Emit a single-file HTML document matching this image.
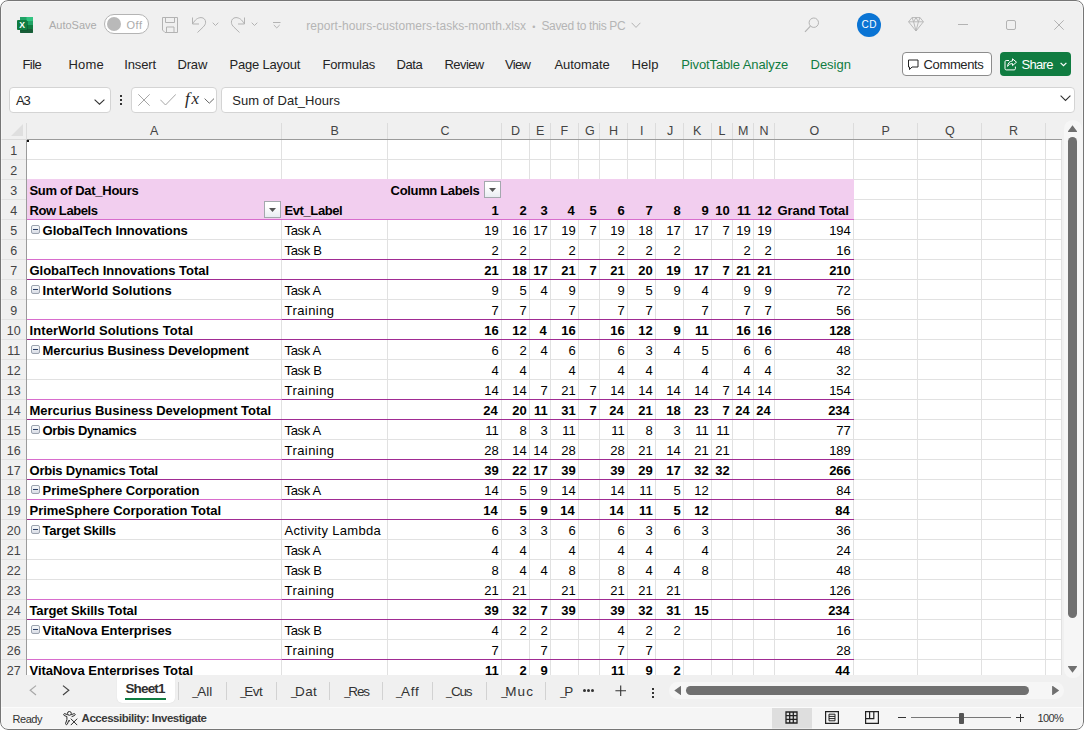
<!DOCTYPE html>
<html lang="en"><head><meta charset="utf-8"><title>report-hours-customers-tasks-month.xlsx - Excel</title>
<style>
html,body{margin:0;padding:0;background:#fff;overflow:hidden}
#win{position:relative;width:1084px;height:730px;box-sizing:border-box;background:#f0f0f0;border-radius:8px;overflow:hidden}
#frame{position:absolute;left:0;top:0;width:1084px;height:730px;box-sizing:border-box;border:1px solid #767676;border-radius:8px;pointer-events:none;box-shadow:inset 0 0 0 1px rgba(255,255,255,.4)}
.t{position:absolute;white-space:pre;}
.b{position:absolute;display:block}
</style></head>
<body><div id="win">
<svg class="b" style="left:17px;top:17px;" width="16" height="16" viewBox="0 0 16 16"><rect x="3" y="0" width="13" height="16" rx="1" fill="#21a366"/>
<rect x="3" y="0" width="6.5" height="4" fill="#21a366"/><rect x="9.5" y="0" width="6.5" height="4" fill="#33c481"/>
<rect x="9.5" y="4" width="6.5" height="4" fill="#21a366"/><rect x="3" y="4" width="6.5" height="4" fill="#107c41"/>
<rect x="3" y="8" width="13" height="4" fill="#107c41"/><rect x="3" y="12" width="13" height="4" rx="1" fill="#185c37"/>
<rect x="3.5" y="4" width="7.5" height="10" fill="#0b5a2e" opacity=".55"/>
<rect x="0" y="3" width="10" height="10" rx="1" fill="#107c41"/>
<text x="5.1" y="11.05" text-anchor="middle" font-family="Liberation Sans, sans-serif" font-weight="bold" font-size="8.6" fill="#fff">X</text></svg>
<span class="t" style="left:49.00px;top:15.19px;font:normal normal 11px/20px 'Liberation Sans', sans-serif;color:#ababab;letter-spacing:-0.012px;">AutoSave</span>
<div class="b" style="left:104px;top:14px;width:45px;height:20px;box-sizing:border-box;border:1px solid #b4b4b4;border-radius:10px;background:#fff"></div>
<div class="b" style="left:107px;top:17px;width:14px;height:14px;border-radius:7px;background:#b9b9b9"></div>
<span class="t" style="left:126.60px;top:15.19px;font:normal normal 11px/20px 'Liberation Sans', sans-serif;color:#ababab;letter-spacing:0.443px;">Off</span>
<svg class="b" style="left:162px;top:17px;" width="16" height="16" viewBox="0 0 16 16"><path d="M0.5 0.5h15v15H3l-2.5-2.5z M3.5 0.5v5h9v-5 M4.5 15.5v-5.5h7.5v5.5" fill="none" stroke="#b3b3b3" stroke-width="1"/></svg>
<svg class="b" style="left:191px;top:16px;" width="16" height="18" viewBox="0 0 16 18"><path d="M1.5 1.5v6.5h6.5 M2 7.6C4 3.5 7 1.6 10 1.6c3 0 4.6 2.2 4.6 4.6 0 2-1 3.4-2.6 5L6.5 16.5" fill="none" stroke="#b3b3b3" stroke-width="1"/></svg>
<svg class="b" style="left:212px;top:22px;" width="7" height="5" viewBox="0 0 7 5"><path d="M0.7 0.7l2.8 2.8 2.8-2.8" fill="none" stroke="#b3b3b3" stroke-width="1"/></svg>
<svg class="b" style="left:230px;top:16px;" width="16" height="18" viewBox="0 0 16 18"><path d="M14.5 1.5v6.5h-6.5 M14 7.6C12 3.5 9 1.6 6 1.6c-3 0-4.6 2.2-4.6 4.6 0 2 1 3.4 2.6 5L9.5 16.5" fill="none" stroke="#b3b3b3" stroke-width="1"/></svg>
<svg class="b" style="left:251px;top:22px;" width="7" height="5" viewBox="0 0 7 5"><path d="M0.7 0.7l2.8 2.8 2.8-2.8" fill="none" stroke="#b3b3b3" stroke-width="1"/></svg>
<svg class="b" style="left:273px;top:21px;" width="8" height="8" viewBox="0 0 8 8"><path d="M0 1.5h7.5 M0.8 4l2.95 2.9 2.95-2.9" fill="none" stroke="#b3b3b3" stroke-width="1"/></svg>
<span class="t" style="left:306.30px;top:16.34px;font:normal normal 12px/20px 'Liberation Sans', sans-serif;color:#b5b5b5;letter-spacing:0.046px;">report-hours-customers-tasks-month.xlsx</span>
<span class="t" style="left:532.30px;top:17.38px;font:normal normal 9px/20px 'Liberation Sans', sans-serif;color:#b5b5b5;letter-spacing:0.000px;">•</span>
<span class="t" style="left:541.40px;top:16.34px;font:normal normal 12px/20px 'Liberation Sans', sans-serif;color:#b5b5b5;letter-spacing:-0.341px;">Saved to this PC</span>
<svg class="b" style="left:631px;top:22px;" width="10" height="7" viewBox="0 0 10 7"><path d="M0.6 0.8l4.4 4.6 4.4-4.6" fill="none" stroke="#b3b3b3" stroke-width="1"/></svg>
<svg class="b" style="left:804px;top:16px;" width="16" height="17" viewBox="0 0 16 17"><circle cx="9.8" cy="6.7" r="4.7" fill="none" stroke="#b3b3b3" stroke-width="1"/><path d="M6.4 10.2L1 15.8" stroke="#b3b3b3" stroke-width="1.2" fill="none"/></svg>
<div class="b" style="left:857px;top:13px;width:24px;height:24px;border-radius:12px;background:#0a74d4"></div>
<span class="t" style="left:861.50px;top:15.34px;font:normal normal 10px/20px 'Liberation Sans', sans-serif;color:#fff;letter-spacing:0.478px;">CD</span>
<svg class="b" style="left:908px;top:17px;" width="16" height="15" viewBox="0 0 16 15"><path d="M4 0.6h8l3.4 4.2L8 14 0.6 4.8z M0.6 4.8h14.8 M4 0.6l1.6 4.2L8 14l2.4-9.2L12 0.6 M5.6 4.8L8 0.6l2.4 4.2" fill="none" stroke="#b3b3b3" stroke-width="0.9" stroke-linejoin="round"/></svg>
<div class="b" style="left:958px;top:24px;width:10px;height:1px;background:#b3b3b3"></div>
<div class="b" style="left:1006px;top:20px;width:10px;height:10px;box-sizing:border-box;border:1px solid #b3b3b3;border-radius:2px"></div>
<svg class="b" style="left:1054px;top:20px;" width="10" height="10" viewBox="0 0 10 10"><path d="M0.3 0.3l9.4 9.4 M9.7 0.3l-9.4 9.4" stroke="#b3b3b3" stroke-width="1" fill="none"/></svg>
<span class="t" style="left:22.40px;top:54.50px;font:normal normal 13px/20px 'Liberation Sans', sans-serif;color:#242424;letter-spacing:-0.539px;">File</span>
<span class="t" style="left:68.50px;top:54.50px;font:normal normal 13px/20px 'Liberation Sans', sans-serif;color:#242424;letter-spacing:0.151px;">Home</span>
<span class="t" style="left:124.30px;top:54.50px;font:normal normal 13px/20px 'Liberation Sans', sans-serif;color:#242424;letter-spacing:-0.140px;">Insert</span>
<span class="t" style="left:177.50px;top:54.50px;font:normal normal 13px/20px 'Liberation Sans', sans-serif;color:#242424;letter-spacing:-0.182px;">Draw</span>
<span class="t" style="left:229.60px;top:54.50px;font:normal normal 13px/20px 'Liberation Sans', sans-serif;color:#242424;letter-spacing:-0.219px;">Page Layout</span>
<span class="t" style="left:322.50px;top:54.50px;font:normal normal 13px/20px 'Liberation Sans', sans-serif;color:#242424;letter-spacing:-0.211px;">Formulas</span>
<span class="t" style="left:396.60px;top:54.50px;font:normal normal 13px/20px 'Liberation Sans', sans-serif;color:#242424;letter-spacing:-0.477px;">Data</span>
<span class="t" style="left:444.60px;top:54.50px;font:normal normal 13px/20px 'Liberation Sans', sans-serif;color:#242424;letter-spacing:-0.607px;">Review</span>
<span class="t" style="left:505.10px;top:54.50px;font:normal normal 13px/20px 'Liberation Sans', sans-serif;color:#242424;letter-spacing:-0.718px;">View</span>
<span class="t" style="left:554.40px;top:54.50px;font:normal normal 13px/20px 'Liberation Sans', sans-serif;color:#242424;letter-spacing:-0.031px;">Automate</span>
<span class="t" style="left:631.40px;top:54.50px;font:normal normal 13px/20px 'Liberation Sans', sans-serif;color:#242424;letter-spacing:0.131px;">Help</span>
<span class="t" style="left:681.20px;top:54.50px;font:normal normal 13px/20px 'Liberation Sans', sans-serif;color:#107c41;letter-spacing:-0.118px;">PivotTable Analyze</span>
<span class="t" style="left:810.50px;top:54.50px;font:normal normal 13px/20px 'Liberation Sans', sans-serif;color:#107c41;letter-spacing:-0.007px;">Design</span>
<div class="b" style="left:902px;top:52px;width:90px;height:24px;box-sizing:border-box;border:1px solid #8c8c8c;border-radius:4px;background:#fff"></div>
<svg class="b" style="left:907px;top:58.5px;" width="12" height="12" viewBox="0 0 12 12"><path d="M1.5 1h9.5v7H5l-2.5 2.6V8h-1z" fill="none" stroke="#242424" stroke-width="1" stroke-linejoin="round"/></svg>
<span class="t" style="left:923.60px;top:54.50px;font:normal normal 13px/20px 'Liberation Sans', sans-serif;color:#242424;letter-spacing:-0.378px;">Comments</span>
<div class="b" style="left:1000px;top:52px;width:71px;height:24px;border-radius:4px;background:#107c41"></div>
<svg class="b" style="left:1004px;top:58px;" width="14" height="13" viewBox="0 0 14 13"><path d="M8.5 0.8l4 3.4-4 3.4V5.6C6 5.6 4.6 6.6 3.6 8.4 3.8 5.2 5.6 3.2 8.5 2.9z M5 2.5H2.2c-.7 0-1.2.5-1.2 1.2v7c0 .7.5 1.2 1.2 1.2h8c.7 0 1.2-.5 1.2-1.2V8.6" fill="none" stroke="#fff" stroke-width="1" stroke-linejoin="round"/></svg>
<span class="t" style="left:1021.50px;top:54.50px;font:normal normal 13px/20px 'Liberation Sans', sans-serif;color:#fff;letter-spacing:-0.690px;">Share</span>
<svg class="b" style="left:1060px;top:62px;" width="7" height="5" viewBox="0 0 7 5"><path d="M0.6 0.8l2.9 2.9 2.9-2.9" fill="none" stroke="#fff" stroke-width="1.2"/></svg>
<div class="b" style="left:9px;top:87px;width:102px;height:26px;box-sizing:border-box;border:1px solid #d4d4d4;border-radius:4px;background:#fff"></div>
<span class="t" style="left:15.90px;top:90.50px;font:normal normal 13px/20px 'Liberation Sans', sans-serif;color:#242424;letter-spacing:-1.071px;">A3</span>
<svg class="b" style="left:94px;top:99px;" width="11" height="6" viewBox="0 0 11 6"><path d="M0.6 0.6l4.9 4.6 4.9-4.6" fill="none" stroke="#333" stroke-width="1.1"/></svg>
<div class="b" style="left:120px;top:95px;width:2px;height:2px;background:#333"></div>
<div class="b" style="left:120px;top:99px;width:2px;height:2px;background:#333"></div>
<div class="b" style="left:120px;top:103px;width:2px;height:2px;background:#333"></div>
<div class="b" style="left:131px;top:87px;width:86px;height:26px;box-sizing:border-box;border:1px solid #d4d4d4;border-radius:4px;background:#fff"></div>
<svg class="b" style="left:138px;top:94px;" width="12" height="12" viewBox="0 0 12 12"><path d="M0.3 0.3l11.4 11.4 M11.7 0.3l-11.4 11.4" stroke="#a6a6a6" stroke-width="1" fill="none"/></svg>
<svg class="b" style="left:160px;top:94px;" width="16" height="12" viewBox="0 0 16 12"><path d="M0.3 5.7l5.2 5.3 10.4-10.7" stroke="#a6a6a6" stroke-width="1" fill="none"/></svg>
<span class="t" style="left:184.90px;top:89.11px;font:italic normal 17px/20px 'Liberation Serif', serif;color:#262626;letter-spacing:1.777px;">fx</span>
<svg class="b" style="left:204px;top:97.5px;" width="11" height="6" viewBox="0 0 11 6"><path d="M0.6 0.6l4.7 4.6 4.7-4.6" fill="none" stroke="#666" stroke-width="1"/></svg>
<div class="b" style="left:221px;top:87px;width:854px;height:26px;box-sizing:border-box;border:1px solid #d4d4d4;border-radius:4px;background:#fff"></div>
<span class="t" style="left:232.30px;top:90.50px;font:normal normal 13px/20px 'Liberation Sans', sans-serif;color:#242424;letter-spacing:0.051px;">Sum of Dat_Hours</span>
<svg class="b" style="left:1060px;top:95px;" width="11" height="7" viewBox="0 0 11 7"><path d="M0.6 0.7l4.9 4.7 4.9-4.7" fill="none" stroke="#333" stroke-width="1.1"/></svg>
<div class="b" style="left:27px;top:140px;width:1035px;height:535px;background:#fff"></div>
<svg class="b" style="left:11px;top:124px;" width="12" height="12" viewBox="0 0 12 12"><path d="M12 0v12H0z" fill="#dfdfdf"/></svg>
<span class="t" style="left:150.00px;top:120.67px;font:normal normal 12.5px/20px 'Liberation Sans', sans-serif;color:#444;letter-spacing:0.000px;">A</span>
<div class="b" style="left:281px;top:123px;width:1px;height:16px;background:#dcdcdc"></div>
<span class="t" style="left:330.50px;top:120.67px;font:normal normal 12.5px/20px 'Liberation Sans', sans-serif;color:#444;letter-spacing:0.000px;">B</span>
<div class="b" style="left:387px;top:123px;width:1px;height:16px;background:#dcdcdc"></div>
<span class="t" style="left:440.50px;top:120.67px;font:normal normal 12.5px/20px 'Liberation Sans', sans-serif;color:#444;letter-spacing:0.000px;">C</span>
<div class="b" style="left:501px;top:123px;width:1px;height:16px;background:#dcdcdc"></div>
<span class="t" style="left:511.00px;top:120.67px;font:normal normal 12.5px/20px 'Liberation Sans', sans-serif;color:#444;letter-spacing:0.000px;">D</span>
<div class="b" style="left:529px;top:123px;width:1px;height:16px;background:#dcdcdc"></div>
<span class="t" style="left:536.00px;top:120.67px;font:normal normal 12.5px/20px 'Liberation Sans', sans-serif;color:#444;letter-spacing:0.000px;">E</span>
<div class="b" style="left:550px;top:123px;width:1px;height:16px;background:#dcdcdc"></div>
<span class="t" style="left:560.50px;top:120.67px;font:normal normal 12.5px/20px 'Liberation Sans', sans-serif;color:#444;letter-spacing:0.000px;">F</span>
<div class="b" style="left:578px;top:123px;width:1px;height:16px;background:#dcdcdc"></div>
<span class="t" style="left:585.00px;top:120.67px;font:normal normal 12.5px/20px 'Liberation Sans', sans-serif;color:#444;letter-spacing:0.000px;">G</span>
<div class="b" style="left:599px;top:123px;width:1px;height:16px;background:#dcdcdc"></div>
<span class="t" style="left:609.00px;top:120.67px;font:normal normal 12.5px/20px 'Liberation Sans', sans-serif;color:#444;letter-spacing:0.000px;">H</span>
<div class="b" style="left:627px;top:123px;width:1px;height:16px;background:#dcdcdc"></div>
<span class="t" style="left:640.00px;top:120.67px;font:normal normal 12.5px/20px 'Liberation Sans', sans-serif;color:#444;letter-spacing:0.000px;">I</span>
<div class="b" style="left:655px;top:123px;width:1px;height:16px;background:#dcdcdc"></div>
<span class="t" style="left:667.00px;top:120.67px;font:normal normal 12.5px/20px 'Liberation Sans', sans-serif;color:#444;letter-spacing:0.000px;">J</span>
<div class="b" style="left:683px;top:123px;width:1px;height:16px;background:#dcdcdc"></div>
<span class="t" style="left:693.00px;top:120.67px;font:normal normal 12.5px/20px 'Liberation Sans', sans-serif;color:#444;letter-spacing:0.000px;">K</span>
<div class="b" style="left:711px;top:123px;width:1px;height:16px;background:#dcdcdc"></div>
<span class="t" style="left:718.50px;top:120.67px;font:normal normal 12.5px/20px 'Liberation Sans', sans-serif;color:#444;letter-spacing:0.000px;">L</span>
<div class="b" style="left:732px;top:123px;width:1px;height:16px;background:#dcdcdc"></div>
<span class="t" style="left:738.00px;top:120.67px;font:normal normal 12.5px/20px 'Liberation Sans', sans-serif;color:#444;letter-spacing:0.000px;">M</span>
<div class="b" style="left:753px;top:123px;width:1px;height:16px;background:#dcdcdc"></div>
<span class="t" style="left:759.50px;top:120.67px;font:normal normal 12.5px/20px 'Liberation Sans', sans-serif;color:#444;letter-spacing:0.000px;">N</span>
<div class="b" style="left:774px;top:123px;width:1px;height:16px;background:#dcdcdc"></div>
<span class="t" style="left:809.50px;top:120.67px;font:normal normal 12.5px/20px 'Liberation Sans', sans-serif;color:#444;letter-spacing:0.000px;">O</span>
<div class="b" style="left:853px;top:123px;width:1px;height:16px;background:#dcdcdc"></div>
<span class="t" style="left:881.50px;top:120.67px;font:normal normal 12.5px/20px 'Liberation Sans', sans-serif;color:#444;letter-spacing:0.000px;">P</span>
<div class="b" style="left:917px;top:123px;width:1px;height:16px;background:#dcdcdc"></div>
<span class="t" style="left:945.00px;top:120.67px;font:normal normal 12.5px/20px 'Liberation Sans', sans-serif;color:#444;letter-spacing:0.000px;">Q</span>
<div class="b" style="left:981px;top:123px;width:1px;height:16px;background:#dcdcdc"></div>
<span class="t" style="left:1009.00px;top:120.67px;font:normal normal 12.5px/20px 'Liberation Sans', sans-serif;color:#444;letter-spacing:0.000px;">R</span>
<div class="b" style="left:1045px;top:123px;width:1px;height:16px;background:#dcdcdc"></div>
<div class="b" style="left:26px;top:123px;width:1px;height:16px;background:#dcdcdc"></div>
<div class="b" style="left:27px;top:179px;width:827px;height:40px;background:#f2ceef"></div>
<div class="b" style="left:27px;top:159px;width:1035px;height:1px;background:#e1e1e1"></div>
<div class="b" style="left:854px;top:179px;width:208px;height:1px;background:#e1e1e1"></div>
<div class="b" style="left:854px;top:199px;width:208px;height:1px;background:#e1e1e1"></div>
<div class="b" style="left:27px;top:219px;width:1035px;height:1px;background:#e1e1e1"></div>
<div class="b" style="left:27px;top:239px;width:1035px;height:1px;background:#e1e1e1"></div>
<div class="b" style="left:27px;top:259px;width:1035px;height:1px;background:#e1e1e1"></div>
<div class="b" style="left:27px;top:279px;width:1035px;height:1px;background:#e1e1e1"></div>
<div class="b" style="left:27px;top:299px;width:1035px;height:1px;background:#e1e1e1"></div>
<div class="b" style="left:27px;top:319px;width:1035px;height:1px;background:#e1e1e1"></div>
<div class="b" style="left:27px;top:339px;width:1035px;height:1px;background:#e1e1e1"></div>
<div class="b" style="left:27px;top:359px;width:1035px;height:1px;background:#e1e1e1"></div>
<div class="b" style="left:27px;top:379px;width:1035px;height:1px;background:#e1e1e1"></div>
<div class="b" style="left:27px;top:399px;width:1035px;height:1px;background:#e1e1e1"></div>
<div class="b" style="left:27px;top:419px;width:1035px;height:1px;background:#e1e1e1"></div>
<div class="b" style="left:27px;top:439px;width:1035px;height:1px;background:#e1e1e1"></div>
<div class="b" style="left:27px;top:459px;width:1035px;height:1px;background:#e1e1e1"></div>
<div class="b" style="left:27px;top:479px;width:1035px;height:1px;background:#e1e1e1"></div>
<div class="b" style="left:27px;top:499px;width:1035px;height:1px;background:#e1e1e1"></div>
<div class="b" style="left:27px;top:519px;width:1035px;height:1px;background:#e1e1e1"></div>
<div class="b" style="left:27px;top:539px;width:1035px;height:1px;background:#e1e1e1"></div>
<div class="b" style="left:27px;top:559px;width:1035px;height:1px;background:#e1e1e1"></div>
<div class="b" style="left:27px;top:579px;width:1035px;height:1px;background:#e1e1e1"></div>
<div class="b" style="left:27px;top:599px;width:1035px;height:1px;background:#e1e1e1"></div>
<div class="b" style="left:27px;top:619px;width:1035px;height:1px;background:#e1e1e1"></div>
<div class="b" style="left:27px;top:639px;width:1035px;height:1px;background:#e1e1e1"></div>
<div class="b" style="left:27px;top:659px;width:1035px;height:1px;background:#e1e1e1"></div>
<div class="b" style="left:27px;top:679px;width:1035px;height:1px;background:#e1e1e1"></div>
<div class="b" style="left:281px;top:140px;width:1px;height:39px;background:#e1e1e1"></div>
<div class="b" style="left:281px;top:220px;width:1px;height:455px;background:#e1e1e1"></div>
<div class="b" style="left:387px;top:140px;width:1px;height:39px;background:#e1e1e1"></div>
<div class="b" style="left:387px;top:220px;width:1px;height:455px;background:#e1e1e1"></div>
<div class="b" style="left:501px;top:140px;width:1px;height:39px;background:#e1e1e1"></div>
<div class="b" style="left:501px;top:220px;width:1px;height:455px;background:#e1e1e1"></div>
<div class="b" style="left:529px;top:140px;width:1px;height:39px;background:#e1e1e1"></div>
<div class="b" style="left:529px;top:220px;width:1px;height:455px;background:#e1e1e1"></div>
<div class="b" style="left:550px;top:140px;width:1px;height:39px;background:#e1e1e1"></div>
<div class="b" style="left:550px;top:220px;width:1px;height:455px;background:#e1e1e1"></div>
<div class="b" style="left:578px;top:140px;width:1px;height:39px;background:#e1e1e1"></div>
<div class="b" style="left:578px;top:220px;width:1px;height:455px;background:#e1e1e1"></div>
<div class="b" style="left:599px;top:140px;width:1px;height:39px;background:#e1e1e1"></div>
<div class="b" style="left:599px;top:220px;width:1px;height:455px;background:#e1e1e1"></div>
<div class="b" style="left:627px;top:140px;width:1px;height:39px;background:#e1e1e1"></div>
<div class="b" style="left:627px;top:220px;width:1px;height:455px;background:#e1e1e1"></div>
<div class="b" style="left:655px;top:140px;width:1px;height:39px;background:#e1e1e1"></div>
<div class="b" style="left:655px;top:220px;width:1px;height:455px;background:#e1e1e1"></div>
<div class="b" style="left:683px;top:140px;width:1px;height:39px;background:#e1e1e1"></div>
<div class="b" style="left:683px;top:220px;width:1px;height:455px;background:#e1e1e1"></div>
<div class="b" style="left:711px;top:140px;width:1px;height:39px;background:#e1e1e1"></div>
<div class="b" style="left:711px;top:220px;width:1px;height:455px;background:#e1e1e1"></div>
<div class="b" style="left:732px;top:140px;width:1px;height:39px;background:#e1e1e1"></div>
<div class="b" style="left:732px;top:220px;width:1px;height:455px;background:#e1e1e1"></div>
<div class="b" style="left:753px;top:140px;width:1px;height:39px;background:#e1e1e1"></div>
<div class="b" style="left:753px;top:220px;width:1px;height:455px;background:#e1e1e1"></div>
<div class="b" style="left:774px;top:140px;width:1px;height:39px;background:#e1e1e1"></div>
<div class="b" style="left:774px;top:220px;width:1px;height:455px;background:#e1e1e1"></div>
<div class="b" style="left:853px;top:140px;width:1px;height:39px;background:#e1e1e1"></div>
<div class="b" style="left:853px;top:220px;width:1px;height:455px;background:#e1e1e1"></div>
<div class="b" style="left:917px;top:140px;width:1px;height:535px;background:#e1e1e1"></div>
<div class="b" style="left:981px;top:140px;width:1px;height:535px;background:#e1e1e1"></div>
<div class="b" style="left:1045px;top:140px;width:1px;height:535px;background:#e1e1e1"></div>
<div class="b" style="left:1061px;top:140px;width:1px;height:535px;background:#e1e1e1"></div>
<div class="b" style="left:1px;top:139px;width:26px;height:1px;background:#dadada"></div>
<div class="b" style="left:27px;top:139px;width:1035px;height:1px;background:#9b9b9b"></div>
<div class="b" style="left:26px;top:140px;width:1px;height:535px;background:#9b9b9b"></div>
<div class="b" style="left:27px;top:140px;width:1.5px;height:1.5px;background:#111"></div>
<span class="t" style="left:10.20px;top:140.67px;font:normal normal 12.5px/20px 'Liberation Sans', sans-serif;color:#444;letter-spacing:0.000px;">1</span>
<div class="b" style="left:1px;top:159px;width:25px;height:1px;background:#e2e2e2"></div>
<span class="t" style="left:10.20px;top:160.67px;font:normal normal 12.5px/20px 'Liberation Sans', sans-serif;color:#444;letter-spacing:0.000px;">2</span>
<div class="b" style="left:1px;top:179px;width:25px;height:1px;background:#e2e2e2"></div>
<span class="t" style="left:10.20px;top:180.67px;font:normal normal 12.5px/20px 'Liberation Sans', sans-serif;color:#444;letter-spacing:0.000px;">3</span>
<div class="b" style="left:1px;top:199px;width:25px;height:1px;background:#e2e2e2"></div>
<span class="t" style="left:10.20px;top:200.67px;font:normal normal 12.5px/20px 'Liberation Sans', sans-serif;color:#444;letter-spacing:0.000px;">4</span>
<div class="b" style="left:1px;top:219px;width:25px;height:1px;background:#e2e2e2"></div>
<span class="t" style="left:10.20px;top:220.67px;font:normal normal 12.5px/20px 'Liberation Sans', sans-serif;color:#444;letter-spacing:0.000px;">5</span>
<div class="b" style="left:1px;top:239px;width:25px;height:1px;background:#e2e2e2"></div>
<span class="t" style="left:10.20px;top:240.67px;font:normal normal 12.5px/20px 'Liberation Sans', sans-serif;color:#444;letter-spacing:0.000px;">6</span>
<div class="b" style="left:1px;top:259px;width:25px;height:1px;background:#e2e2e2"></div>
<span class="t" style="left:10.20px;top:260.67px;font:normal normal 12.5px/20px 'Liberation Sans', sans-serif;color:#444;letter-spacing:0.000px;">7</span>
<div class="b" style="left:1px;top:279px;width:25px;height:1px;background:#e2e2e2"></div>
<span class="t" style="left:10.20px;top:280.67px;font:normal normal 12.5px/20px 'Liberation Sans', sans-serif;color:#444;letter-spacing:0.000px;">8</span>
<div class="b" style="left:1px;top:299px;width:25px;height:1px;background:#e2e2e2"></div>
<span class="t" style="left:10.20px;top:300.67px;font:normal normal 12.5px/20px 'Liberation Sans', sans-serif;color:#444;letter-spacing:0.000px;">9</span>
<div class="b" style="left:1px;top:319px;width:25px;height:1px;background:#e2e2e2"></div>
<span class="t" style="left:6.72px;top:320.67px;font:normal normal 12.5px/20px 'Liberation Sans', sans-serif;color:#444;letter-spacing:0.000px;">10</span>
<div class="b" style="left:1px;top:339px;width:25px;height:1px;background:#e2e2e2"></div>
<span class="t" style="left:7.19px;top:340.67px;font:normal normal 12.5px/20px 'Liberation Sans', sans-serif;color:#444;letter-spacing:0.000px;">11</span>
<div class="b" style="left:1px;top:359px;width:25px;height:1px;background:#e2e2e2"></div>
<span class="t" style="left:6.72px;top:360.67px;font:normal normal 12.5px/20px 'Liberation Sans', sans-serif;color:#444;letter-spacing:0.000px;">12</span>
<div class="b" style="left:1px;top:379px;width:25px;height:1px;background:#e2e2e2"></div>
<span class="t" style="left:6.72px;top:380.67px;font:normal normal 12.5px/20px 'Liberation Sans', sans-serif;color:#444;letter-spacing:0.000px;">13</span>
<div class="b" style="left:1px;top:399px;width:25px;height:1px;background:#e2e2e2"></div>
<span class="t" style="left:6.72px;top:400.67px;font:normal normal 12.5px/20px 'Liberation Sans', sans-serif;color:#444;letter-spacing:0.000px;">14</span>
<div class="b" style="left:1px;top:419px;width:25px;height:1px;background:#e2e2e2"></div>
<span class="t" style="left:6.72px;top:420.67px;font:normal normal 12.5px/20px 'Liberation Sans', sans-serif;color:#444;letter-spacing:0.000px;">15</span>
<div class="b" style="left:1px;top:439px;width:25px;height:1px;background:#e2e2e2"></div>
<span class="t" style="left:6.72px;top:440.67px;font:normal normal 12.5px/20px 'Liberation Sans', sans-serif;color:#444;letter-spacing:0.000px;">16</span>
<div class="b" style="left:1px;top:459px;width:25px;height:1px;background:#e2e2e2"></div>
<span class="t" style="left:6.72px;top:460.67px;font:normal normal 12.5px/20px 'Liberation Sans', sans-serif;color:#444;letter-spacing:0.000px;">17</span>
<div class="b" style="left:1px;top:479px;width:25px;height:1px;background:#e2e2e2"></div>
<span class="t" style="left:6.72px;top:480.67px;font:normal normal 12.5px/20px 'Liberation Sans', sans-serif;color:#444;letter-spacing:0.000px;">18</span>
<div class="b" style="left:1px;top:499px;width:25px;height:1px;background:#e2e2e2"></div>
<span class="t" style="left:6.72px;top:500.67px;font:normal normal 12.5px/20px 'Liberation Sans', sans-serif;color:#444;letter-spacing:0.000px;">19</span>
<div class="b" style="left:1px;top:519px;width:25px;height:1px;background:#e2e2e2"></div>
<span class="t" style="left:6.72px;top:520.67px;font:normal normal 12.5px/20px 'Liberation Sans', sans-serif;color:#444;letter-spacing:0.000px;">20</span>
<div class="b" style="left:1px;top:539px;width:25px;height:1px;background:#e2e2e2"></div>
<span class="t" style="left:6.72px;top:540.67px;font:normal normal 12.5px/20px 'Liberation Sans', sans-serif;color:#444;letter-spacing:0.000px;">21</span>
<div class="b" style="left:1px;top:559px;width:25px;height:1px;background:#e2e2e2"></div>
<span class="t" style="left:6.72px;top:560.67px;font:normal normal 12.5px/20px 'Liberation Sans', sans-serif;color:#444;letter-spacing:0.000px;">22</span>
<div class="b" style="left:1px;top:579px;width:25px;height:1px;background:#e2e2e2"></div>
<span class="t" style="left:6.72px;top:580.67px;font:normal normal 12.5px/20px 'Liberation Sans', sans-serif;color:#444;letter-spacing:0.000px;">23</span>
<div class="b" style="left:1px;top:599px;width:25px;height:1px;background:#e2e2e2"></div>
<span class="t" style="left:6.72px;top:600.67px;font:normal normal 12.5px/20px 'Liberation Sans', sans-serif;color:#444;letter-spacing:0.000px;">24</span>
<div class="b" style="left:1px;top:619px;width:25px;height:1px;background:#e2e2e2"></div>
<span class="t" style="left:6.72px;top:620.67px;font:normal normal 12.5px/20px 'Liberation Sans', sans-serif;color:#444;letter-spacing:0.000px;">25</span>
<div class="b" style="left:1px;top:639px;width:25px;height:1px;background:#e2e2e2"></div>
<span class="t" style="left:6.72px;top:640.67px;font:normal normal 12.5px/20px 'Liberation Sans', sans-serif;color:#444;letter-spacing:0.000px;">26</span>
<div class="b" style="left:1px;top:659px;width:25px;height:1px;background:#e2e2e2"></div>
<span class="t" style="left:6.72px;top:660.67px;font:normal normal 12.5px/20px 'Liberation Sans', sans-serif;color:#444;letter-spacing:0.000px;">27</span>
<div class="b" style="left:1px;top:679px;width:25px;height:1px;background:#e2e2e2"></div>
<div class="b" style="left:27px;top:219px;width:827px;height:1px;background:#d86dcd"></div>
<span class="t" style="left:29.40px;top:180.50px;font:normal bold 13px/20px 'Liberation Sans', sans-serif;color:#000;letter-spacing:-0.265px;">Sum of Dat_Hours</span>
<span class="t" style="left:390.60px;top:180.50px;font:normal bold 13px/20px 'Liberation Sans', sans-serif;color:#000;letter-spacing:-0.337px;">Column Labels</span>
<span class="t" style="left:29.40px;top:200.50px;font:normal bold 13px/20px 'Liberation Sans', sans-serif;color:#000;letter-spacing:-0.401px;">Row Labels</span>
<span class="t" style="left:284.50px;top:200.50px;font:normal bold 13px/20px 'Liberation Sans', sans-serif;color:#000;letter-spacing:-0.400px;">Evt_Label</span>
<span class="t" style="left:491.60px;top:200.50px;font:normal bold 13px/20px 'Liberation Sans', sans-serif;color:#000;letter-spacing:0.000px;">1</span>
<span class="t" style="left:519.60px;top:200.50px;font:normal bold 13px/20px 'Liberation Sans', sans-serif;color:#000;letter-spacing:0.000px;">2</span>
<span class="t" style="left:540.60px;top:200.50px;font:normal bold 13px/20px 'Liberation Sans', sans-serif;color:#000;letter-spacing:0.000px;">3</span>
<span class="t" style="left:567.60px;top:200.50px;font:normal bold 13px/20px 'Liberation Sans', sans-serif;color:#000;letter-spacing:0.000px;">4</span>
<span class="t" style="left:589.60px;top:200.50px;font:normal bold 13px/20px 'Liberation Sans', sans-serif;color:#000;letter-spacing:0.000px;">5</span>
<span class="t" style="left:617.60px;top:200.50px;font:normal bold 13px/20px 'Liberation Sans', sans-serif;color:#000;letter-spacing:0.000px;">6</span>
<span class="t" style="left:645.60px;top:200.50px;font:normal bold 13px/20px 'Liberation Sans', sans-serif;color:#000;letter-spacing:0.000px;">7</span>
<span class="t" style="left:673.60px;top:200.50px;font:normal bold 13px/20px 'Liberation Sans', sans-serif;color:#000;letter-spacing:0.000px;">8</span>
<span class="t" style="left:701.60px;top:200.50px;font:normal bold 13px/20px 'Liberation Sans', sans-serif;color:#000;letter-spacing:0.000px;">9</span>
<span class="t" style="left:715.37px;top:200.50px;font:normal bold 13px/20px 'Liberation Sans', sans-serif;color:#000;letter-spacing:0.000px;">10</span>
<span class="t" style="left:737.09px;top:200.50px;font:normal bold 13px/20px 'Liberation Sans', sans-serif;color:#000;letter-spacing:0.000px;">11</span>
<span class="t" style="left:757.37px;top:200.50px;font:normal bold 13px/20px 'Liberation Sans', sans-serif;color:#000;letter-spacing:0.000px;">12</span>
<span class="t" style="left:777.40px;top:200.50px;font:normal bold 13px/20px 'Liberation Sans', sans-serif;color:#000;letter-spacing:-0.047px;">Grand Total</span>
<div class="b" style="left:264px;top:201px;width:17px;height:17px;box-sizing:border-box;border:1px solid #a3a8ad;background:linear-gradient(#fff 30%,#e9edf2)"></div>
<svg class="b" style="left:269px;top:208px;" width="7" height="4" viewBox="0 0 7 4"><path d="M0 0h7L3.5 4z" fill="#555"/></svg>
<div class="b" style="left:484px;top:181px;width:17px;height:17px;box-sizing:border-box;border:1px solid #a3a8ad;background:linear-gradient(#fff 30%,#e9edf2)"></div>
<svg class="b" style="left:489px;top:188px;" width="7" height="4" viewBox="0 0 7 4"><path d="M0 0h7L3.5 4z" fill="#555"/></svg>
<div class="b" style="left:31px;top:225px;width:9px;height:9px;box-sizing:border-box;border:1px solid #9ba2ae;border-radius:2px;background:linear-gradient(#f8f9fb,#d9dde6)"></div>
<div class="b" style="left:33px;top:229px;width:5px;height:1px;background:#2b3f66"></div>
<span class="t" style="left:42.60px;top:220.50px;font:normal bold 13px/20px 'Liberation Sans', sans-serif;color:#000;letter-spacing:-0.055px;">GlobalTech Innovations</span>
<span class="t" style="left:284.50px;top:220.50px;font:normal normal 13px/20px 'Liberation Sans', sans-serif;color:#000;letter-spacing:-0.308px;">Task A</span>
<span class="t" style="left:484.37px;top:220.50px;font:normal normal 13px/20px 'Liberation Sans', sans-serif;color:#000;letter-spacing:0.000px;">19</span>
<span class="t" style="left:512.37px;top:220.50px;font:normal normal 13px/20px 'Liberation Sans', sans-serif;color:#000;letter-spacing:0.000px;">16</span>
<span class="t" style="left:533.37px;top:220.50px;font:normal normal 13px/20px 'Liberation Sans', sans-serif;color:#000;letter-spacing:0.000px;">17</span>
<span class="t" style="left:561.37px;top:220.50px;font:normal normal 13px/20px 'Liberation Sans', sans-serif;color:#000;letter-spacing:0.000px;">19</span>
<span class="t" style="left:589.60px;top:220.50px;font:normal normal 13px/20px 'Liberation Sans', sans-serif;color:#000;letter-spacing:0.000px;">7</span>
<span class="t" style="left:610.37px;top:220.50px;font:normal normal 13px/20px 'Liberation Sans', sans-serif;color:#000;letter-spacing:0.000px;">19</span>
<span class="t" style="left:638.37px;top:220.50px;font:normal normal 13px/20px 'Liberation Sans', sans-serif;color:#000;letter-spacing:0.000px;">18</span>
<span class="t" style="left:666.37px;top:220.50px;font:normal normal 13px/20px 'Liberation Sans', sans-serif;color:#000;letter-spacing:0.000px;">17</span>
<span class="t" style="left:694.37px;top:220.50px;font:normal normal 13px/20px 'Liberation Sans', sans-serif;color:#000;letter-spacing:0.000px;">17</span>
<span class="t" style="left:722.60px;top:220.50px;font:normal normal 13px/20px 'Liberation Sans', sans-serif;color:#000;letter-spacing:0.000px;">7</span>
<span class="t" style="left:736.37px;top:220.50px;font:normal normal 13px/20px 'Liberation Sans', sans-serif;color:#000;letter-spacing:0.000px;">19</span>
<span class="t" style="left:757.37px;top:220.50px;font:normal normal 13px/20px 'Liberation Sans', sans-serif;color:#000;letter-spacing:0.000px;">19</span>
<span class="t" style="left:829.14px;top:220.50px;font:normal normal 13px/20px 'Liberation Sans', sans-serif;color:#000;letter-spacing:0.000px;">194</span>
<span class="t" style="left:284.50px;top:240.50px;font:normal normal 13px/20px 'Liberation Sans', sans-serif;color:#000;letter-spacing:-0.328px;">Task B</span>
<span class="t" style="left:491.60px;top:240.50px;font:normal normal 13px/20px 'Liberation Sans', sans-serif;color:#000;letter-spacing:0.000px;">2</span>
<span class="t" style="left:519.60px;top:240.50px;font:normal normal 13px/20px 'Liberation Sans', sans-serif;color:#000;letter-spacing:0.000px;">2</span>
<span class="t" style="left:568.60px;top:240.50px;font:normal normal 13px/20px 'Liberation Sans', sans-serif;color:#000;letter-spacing:0.000px;">2</span>
<span class="t" style="left:617.60px;top:240.50px;font:normal normal 13px/20px 'Liberation Sans', sans-serif;color:#000;letter-spacing:0.000px;">2</span>
<span class="t" style="left:645.60px;top:240.50px;font:normal normal 13px/20px 'Liberation Sans', sans-serif;color:#000;letter-spacing:0.000px;">2</span>
<span class="t" style="left:673.60px;top:240.50px;font:normal normal 13px/20px 'Liberation Sans', sans-serif;color:#000;letter-spacing:0.000px;">2</span>
<span class="t" style="left:743.60px;top:240.50px;font:normal normal 13px/20px 'Liberation Sans', sans-serif;color:#000;letter-spacing:0.000px;">2</span>
<span class="t" style="left:764.60px;top:240.50px;font:normal normal 13px/20px 'Liberation Sans', sans-serif;color:#000;letter-spacing:0.000px;">2</span>
<span class="t" style="left:836.37px;top:240.50px;font:normal normal 13px/20px 'Liberation Sans', sans-serif;color:#000;letter-spacing:0.000px;">16</span>
<span class="t" style="left:29.50px;top:260.50px;font:normal bold 13px/20px 'Liberation Sans', sans-serif;color:#000;letter-spacing:-0.017px;">GlobalTech Innovations Total</span>
<div class="b" style="left:27px;top:259px;width:255px;height:1px;background:#d86dcd"></div>
<div class="b" style="left:282px;top:259px;width:572px;height:1px;background:#a02b93"></div>
<div class="b" style="left:27px;top:279px;width:827px;height:1px;background:#a02b93"></div>
<span class="t" style="left:484.37px;top:260.50px;font:normal bold 13px/20px 'Liberation Sans', sans-serif;color:#000;letter-spacing:0.000px;">21</span>
<span class="t" style="left:512.37px;top:260.50px;font:normal bold 13px/20px 'Liberation Sans', sans-serif;color:#000;letter-spacing:0.000px;">18</span>
<span class="t" style="left:533.37px;top:260.50px;font:normal bold 13px/20px 'Liberation Sans', sans-serif;color:#000;letter-spacing:0.000px;">17</span>
<span class="t" style="left:561.37px;top:260.50px;font:normal bold 13px/20px 'Liberation Sans', sans-serif;color:#000;letter-spacing:0.000px;">21</span>
<span class="t" style="left:589.60px;top:260.50px;font:normal bold 13px/20px 'Liberation Sans', sans-serif;color:#000;letter-spacing:0.000px;">7</span>
<span class="t" style="left:610.37px;top:260.50px;font:normal bold 13px/20px 'Liberation Sans', sans-serif;color:#000;letter-spacing:0.000px;">21</span>
<span class="t" style="left:638.37px;top:260.50px;font:normal bold 13px/20px 'Liberation Sans', sans-serif;color:#000;letter-spacing:0.000px;">20</span>
<span class="t" style="left:666.37px;top:260.50px;font:normal bold 13px/20px 'Liberation Sans', sans-serif;color:#000;letter-spacing:0.000px;">19</span>
<span class="t" style="left:694.37px;top:260.50px;font:normal bold 13px/20px 'Liberation Sans', sans-serif;color:#000;letter-spacing:0.000px;">17</span>
<span class="t" style="left:722.60px;top:260.50px;font:normal bold 13px/20px 'Liberation Sans', sans-serif;color:#000;letter-spacing:0.000px;">7</span>
<span class="t" style="left:736.37px;top:260.50px;font:normal bold 13px/20px 'Liberation Sans', sans-serif;color:#000;letter-spacing:0.000px;">21</span>
<span class="t" style="left:757.37px;top:260.50px;font:normal bold 13px/20px 'Liberation Sans', sans-serif;color:#000;letter-spacing:0.000px;">21</span>
<span class="t" style="left:829.14px;top:260.50px;font:normal bold 13px/20px 'Liberation Sans', sans-serif;color:#000;letter-spacing:0.000px;">210</span>
<div class="b" style="left:31px;top:285px;width:9px;height:9px;box-sizing:border-box;border:1px solid #9ba2ae;border-radius:2px;background:linear-gradient(#f8f9fb,#d9dde6)"></div>
<div class="b" style="left:33px;top:289px;width:5px;height:1px;background:#2b3f66"></div>
<span class="t" style="left:42.60px;top:280.50px;font:normal bold 13px/20px 'Liberation Sans', sans-serif;color:#000;letter-spacing:0.086px;">InterWorld Solutions</span>
<span class="t" style="left:284.50px;top:280.50px;font:normal normal 13px/20px 'Liberation Sans', sans-serif;color:#000;letter-spacing:-0.308px;">Task A</span>
<span class="t" style="left:491.60px;top:280.50px;font:normal normal 13px/20px 'Liberation Sans', sans-serif;color:#000;letter-spacing:0.000px;">9</span>
<span class="t" style="left:519.60px;top:280.50px;font:normal normal 13px/20px 'Liberation Sans', sans-serif;color:#000;letter-spacing:0.000px;">5</span>
<span class="t" style="left:540.60px;top:280.50px;font:normal normal 13px/20px 'Liberation Sans', sans-serif;color:#000;letter-spacing:0.000px;">4</span>
<span class="t" style="left:568.60px;top:280.50px;font:normal normal 13px/20px 'Liberation Sans', sans-serif;color:#000;letter-spacing:0.000px;">9</span>
<span class="t" style="left:617.60px;top:280.50px;font:normal normal 13px/20px 'Liberation Sans', sans-serif;color:#000;letter-spacing:0.000px;">9</span>
<span class="t" style="left:645.60px;top:280.50px;font:normal normal 13px/20px 'Liberation Sans', sans-serif;color:#000;letter-spacing:0.000px;">5</span>
<span class="t" style="left:673.60px;top:280.50px;font:normal normal 13px/20px 'Liberation Sans', sans-serif;color:#000;letter-spacing:0.000px;">9</span>
<span class="t" style="left:701.60px;top:280.50px;font:normal normal 13px/20px 'Liberation Sans', sans-serif;color:#000;letter-spacing:0.000px;">4</span>
<span class="t" style="left:743.60px;top:280.50px;font:normal normal 13px/20px 'Liberation Sans', sans-serif;color:#000;letter-spacing:0.000px;">9</span>
<span class="t" style="left:764.60px;top:280.50px;font:normal normal 13px/20px 'Liberation Sans', sans-serif;color:#000;letter-spacing:0.000px;">9</span>
<span class="t" style="left:836.37px;top:280.50px;font:normal normal 13px/20px 'Liberation Sans', sans-serif;color:#000;letter-spacing:0.000px;">72</span>
<span class="t" style="left:284.50px;top:300.50px;font:normal normal 13px/20px 'Liberation Sans', sans-serif;color:#000;letter-spacing:0.435px;">Training</span>
<span class="t" style="left:491.60px;top:300.50px;font:normal normal 13px/20px 'Liberation Sans', sans-serif;color:#000;letter-spacing:0.000px;">7</span>
<span class="t" style="left:519.60px;top:300.50px;font:normal normal 13px/20px 'Liberation Sans', sans-serif;color:#000;letter-spacing:0.000px;">7</span>
<span class="t" style="left:568.60px;top:300.50px;font:normal normal 13px/20px 'Liberation Sans', sans-serif;color:#000;letter-spacing:0.000px;">7</span>
<span class="t" style="left:617.60px;top:300.50px;font:normal normal 13px/20px 'Liberation Sans', sans-serif;color:#000;letter-spacing:0.000px;">7</span>
<span class="t" style="left:645.60px;top:300.50px;font:normal normal 13px/20px 'Liberation Sans', sans-serif;color:#000;letter-spacing:0.000px;">7</span>
<span class="t" style="left:701.60px;top:300.50px;font:normal normal 13px/20px 'Liberation Sans', sans-serif;color:#000;letter-spacing:0.000px;">7</span>
<span class="t" style="left:743.60px;top:300.50px;font:normal normal 13px/20px 'Liberation Sans', sans-serif;color:#000;letter-spacing:0.000px;">7</span>
<span class="t" style="left:764.60px;top:300.50px;font:normal normal 13px/20px 'Liberation Sans', sans-serif;color:#000;letter-spacing:0.000px;">7</span>
<span class="t" style="left:836.37px;top:300.50px;font:normal normal 13px/20px 'Liberation Sans', sans-serif;color:#000;letter-spacing:0.000px;">56</span>
<span class="t" style="left:29.50px;top:320.50px;font:normal bold 13px/20px 'Liberation Sans', sans-serif;color:#000;letter-spacing:0.093px;">InterWorld Solutions Total</span>
<div class="b" style="left:27px;top:319px;width:255px;height:1px;background:#d86dcd"></div>
<div class="b" style="left:282px;top:319px;width:572px;height:1px;background:#a02b93"></div>
<div class="b" style="left:27px;top:339px;width:827px;height:1px;background:#a02b93"></div>
<span class="t" style="left:484.37px;top:320.50px;font:normal bold 13px/20px 'Liberation Sans', sans-serif;color:#000;letter-spacing:0.000px;">16</span>
<span class="t" style="left:512.37px;top:320.50px;font:normal bold 13px/20px 'Liberation Sans', sans-serif;color:#000;letter-spacing:0.000px;">12</span>
<span class="t" style="left:539.60px;top:320.50px;font:normal bold 13px/20px 'Liberation Sans', sans-serif;color:#000;letter-spacing:0.000px;">4</span>
<span class="t" style="left:561.37px;top:320.50px;font:normal bold 13px/20px 'Liberation Sans', sans-serif;color:#000;letter-spacing:0.000px;">16</span>
<span class="t" style="left:610.37px;top:320.50px;font:normal bold 13px/20px 'Liberation Sans', sans-serif;color:#000;letter-spacing:0.000px;">16</span>
<span class="t" style="left:638.37px;top:320.50px;font:normal bold 13px/20px 'Liberation Sans', sans-serif;color:#000;letter-spacing:0.000px;">12</span>
<span class="t" style="left:673.60px;top:320.50px;font:normal bold 13px/20px 'Liberation Sans', sans-serif;color:#000;letter-spacing:0.000px;">9</span>
<span class="t" style="left:695.09px;top:320.50px;font:normal bold 13px/20px 'Liberation Sans', sans-serif;color:#000;letter-spacing:0.000px;">11</span>
<span class="t" style="left:736.37px;top:320.50px;font:normal bold 13px/20px 'Liberation Sans', sans-serif;color:#000;letter-spacing:0.000px;">16</span>
<span class="t" style="left:757.37px;top:320.50px;font:normal bold 13px/20px 'Liberation Sans', sans-serif;color:#000;letter-spacing:0.000px;">16</span>
<span class="t" style="left:829.14px;top:320.50px;font:normal bold 13px/20px 'Liberation Sans', sans-serif;color:#000;letter-spacing:0.000px;">128</span>
<div class="b" style="left:31px;top:345px;width:9px;height:9px;box-sizing:border-box;border:1px solid #9ba2ae;border-radius:2px;background:linear-gradient(#f8f9fb,#d9dde6)"></div>
<div class="b" style="left:33px;top:349px;width:5px;height:1px;background:#2b3f66"></div>
<span class="t" style="left:42.60px;top:340.50px;font:normal bold 13px/20px 'Liberation Sans', sans-serif;color:#000;letter-spacing:-0.085px;">Mercurius Business Development</span>
<span class="t" style="left:284.50px;top:340.50px;font:normal normal 13px/20px 'Liberation Sans', sans-serif;color:#000;letter-spacing:-0.308px;">Task A</span>
<span class="t" style="left:491.60px;top:340.50px;font:normal normal 13px/20px 'Liberation Sans', sans-serif;color:#000;letter-spacing:0.000px;">6</span>
<span class="t" style="left:519.60px;top:340.50px;font:normal normal 13px/20px 'Liberation Sans', sans-serif;color:#000;letter-spacing:0.000px;">2</span>
<span class="t" style="left:540.60px;top:340.50px;font:normal normal 13px/20px 'Liberation Sans', sans-serif;color:#000;letter-spacing:0.000px;">4</span>
<span class="t" style="left:568.60px;top:340.50px;font:normal normal 13px/20px 'Liberation Sans', sans-serif;color:#000;letter-spacing:0.000px;">6</span>
<span class="t" style="left:617.60px;top:340.50px;font:normal normal 13px/20px 'Liberation Sans', sans-serif;color:#000;letter-spacing:0.000px;">6</span>
<span class="t" style="left:645.60px;top:340.50px;font:normal normal 13px/20px 'Liberation Sans', sans-serif;color:#000;letter-spacing:0.000px;">3</span>
<span class="t" style="left:673.60px;top:340.50px;font:normal normal 13px/20px 'Liberation Sans', sans-serif;color:#000;letter-spacing:0.000px;">4</span>
<span class="t" style="left:701.60px;top:340.50px;font:normal normal 13px/20px 'Liberation Sans', sans-serif;color:#000;letter-spacing:0.000px;">5</span>
<span class="t" style="left:743.60px;top:340.50px;font:normal normal 13px/20px 'Liberation Sans', sans-serif;color:#000;letter-spacing:0.000px;">6</span>
<span class="t" style="left:764.60px;top:340.50px;font:normal normal 13px/20px 'Liberation Sans', sans-serif;color:#000;letter-spacing:0.000px;">6</span>
<span class="t" style="left:836.37px;top:340.50px;font:normal normal 13px/20px 'Liberation Sans', sans-serif;color:#000;letter-spacing:0.000px;">48</span>
<span class="t" style="left:284.50px;top:360.50px;font:normal normal 13px/20px 'Liberation Sans', sans-serif;color:#000;letter-spacing:-0.328px;">Task B</span>
<span class="t" style="left:491.60px;top:360.50px;font:normal normal 13px/20px 'Liberation Sans', sans-serif;color:#000;letter-spacing:0.000px;">4</span>
<span class="t" style="left:519.60px;top:360.50px;font:normal normal 13px/20px 'Liberation Sans', sans-serif;color:#000;letter-spacing:0.000px;">4</span>
<span class="t" style="left:568.60px;top:360.50px;font:normal normal 13px/20px 'Liberation Sans', sans-serif;color:#000;letter-spacing:0.000px;">4</span>
<span class="t" style="left:617.60px;top:360.50px;font:normal normal 13px/20px 'Liberation Sans', sans-serif;color:#000;letter-spacing:0.000px;">4</span>
<span class="t" style="left:645.60px;top:360.50px;font:normal normal 13px/20px 'Liberation Sans', sans-serif;color:#000;letter-spacing:0.000px;">4</span>
<span class="t" style="left:701.60px;top:360.50px;font:normal normal 13px/20px 'Liberation Sans', sans-serif;color:#000;letter-spacing:0.000px;">4</span>
<span class="t" style="left:743.60px;top:360.50px;font:normal normal 13px/20px 'Liberation Sans', sans-serif;color:#000;letter-spacing:0.000px;">4</span>
<span class="t" style="left:764.60px;top:360.50px;font:normal normal 13px/20px 'Liberation Sans', sans-serif;color:#000;letter-spacing:0.000px;">4</span>
<span class="t" style="left:836.37px;top:360.50px;font:normal normal 13px/20px 'Liberation Sans', sans-serif;color:#000;letter-spacing:0.000px;">32</span>
<span class="t" style="left:284.50px;top:380.50px;font:normal normal 13px/20px 'Liberation Sans', sans-serif;color:#000;letter-spacing:0.435px;">Training</span>
<span class="t" style="left:484.37px;top:380.50px;font:normal normal 13px/20px 'Liberation Sans', sans-serif;color:#000;letter-spacing:0.000px;">14</span>
<span class="t" style="left:512.37px;top:380.50px;font:normal normal 13px/20px 'Liberation Sans', sans-serif;color:#000;letter-spacing:0.000px;">14</span>
<span class="t" style="left:540.60px;top:380.50px;font:normal normal 13px/20px 'Liberation Sans', sans-serif;color:#000;letter-spacing:0.000px;">7</span>
<span class="t" style="left:561.37px;top:380.50px;font:normal normal 13px/20px 'Liberation Sans', sans-serif;color:#000;letter-spacing:0.000px;">21</span>
<span class="t" style="left:589.60px;top:380.50px;font:normal normal 13px/20px 'Liberation Sans', sans-serif;color:#000;letter-spacing:0.000px;">7</span>
<span class="t" style="left:610.37px;top:380.50px;font:normal normal 13px/20px 'Liberation Sans', sans-serif;color:#000;letter-spacing:0.000px;">14</span>
<span class="t" style="left:638.37px;top:380.50px;font:normal normal 13px/20px 'Liberation Sans', sans-serif;color:#000;letter-spacing:0.000px;">14</span>
<span class="t" style="left:666.37px;top:380.50px;font:normal normal 13px/20px 'Liberation Sans', sans-serif;color:#000;letter-spacing:0.000px;">14</span>
<span class="t" style="left:694.37px;top:380.50px;font:normal normal 13px/20px 'Liberation Sans', sans-serif;color:#000;letter-spacing:0.000px;">14</span>
<span class="t" style="left:722.60px;top:380.50px;font:normal normal 13px/20px 'Liberation Sans', sans-serif;color:#000;letter-spacing:0.000px;">7</span>
<span class="t" style="left:736.37px;top:380.50px;font:normal normal 13px/20px 'Liberation Sans', sans-serif;color:#000;letter-spacing:0.000px;">14</span>
<span class="t" style="left:757.37px;top:380.50px;font:normal normal 13px/20px 'Liberation Sans', sans-serif;color:#000;letter-spacing:0.000px;">14</span>
<span class="t" style="left:829.14px;top:380.50px;font:normal normal 13px/20px 'Liberation Sans', sans-serif;color:#000;letter-spacing:0.000px;">154</span>
<span class="t" style="left:29.50px;top:400.50px;font:normal bold 13px/20px 'Liberation Sans', sans-serif;color:#000;letter-spacing:-0.025px;">Mercurius Business Development Total</span>
<div class="b" style="left:27px;top:399px;width:255px;height:1px;background:#d86dcd"></div>
<div class="b" style="left:282px;top:399px;width:572px;height:1px;background:#a02b93"></div>
<div class="b" style="left:27px;top:419px;width:827px;height:1px;background:#a02b93"></div>
<span class="t" style="left:483.37px;top:400.50px;font:normal bold 13px/20px 'Liberation Sans', sans-serif;color:#000;letter-spacing:0.000px;">24</span>
<span class="t" style="left:512.37px;top:400.50px;font:normal bold 13px/20px 'Liberation Sans', sans-serif;color:#000;letter-spacing:0.000px;">20</span>
<span class="t" style="left:534.09px;top:400.50px;font:normal bold 13px/20px 'Liberation Sans', sans-serif;color:#000;letter-spacing:0.000px;">11</span>
<span class="t" style="left:561.37px;top:400.50px;font:normal bold 13px/20px 'Liberation Sans', sans-serif;color:#000;letter-spacing:0.000px;">31</span>
<span class="t" style="left:589.60px;top:400.50px;font:normal bold 13px/20px 'Liberation Sans', sans-serif;color:#000;letter-spacing:0.000px;">7</span>
<span class="t" style="left:609.37px;top:400.50px;font:normal bold 13px/20px 'Liberation Sans', sans-serif;color:#000;letter-spacing:0.000px;">24</span>
<span class="t" style="left:638.37px;top:400.50px;font:normal bold 13px/20px 'Liberation Sans', sans-serif;color:#000;letter-spacing:0.000px;">21</span>
<span class="t" style="left:666.37px;top:400.50px;font:normal bold 13px/20px 'Liberation Sans', sans-serif;color:#000;letter-spacing:0.000px;">18</span>
<span class="t" style="left:694.37px;top:400.50px;font:normal bold 13px/20px 'Liberation Sans', sans-serif;color:#000;letter-spacing:0.000px;">23</span>
<span class="t" style="left:722.60px;top:400.50px;font:normal bold 13px/20px 'Liberation Sans', sans-serif;color:#000;letter-spacing:0.000px;">7</span>
<span class="t" style="left:735.37px;top:400.50px;font:normal bold 13px/20px 'Liberation Sans', sans-serif;color:#000;letter-spacing:0.000px;">24</span>
<span class="t" style="left:756.37px;top:400.50px;font:normal bold 13px/20px 'Liberation Sans', sans-serif;color:#000;letter-spacing:0.000px;">24</span>
<span class="t" style="left:828.14px;top:400.50px;font:normal bold 13px/20px 'Liberation Sans', sans-serif;color:#000;letter-spacing:0.000px;">234</span>
<div class="b" style="left:31px;top:425px;width:9px;height:9px;box-sizing:border-box;border:1px solid #9ba2ae;border-radius:2px;background:linear-gradient(#f8f9fb,#d9dde6)"></div>
<div class="b" style="left:33px;top:429px;width:5px;height:1px;background:#2b3f66"></div>
<span class="t" style="left:42.60px;top:420.50px;font:normal bold 13px/20px 'Liberation Sans', sans-serif;color:#000;letter-spacing:-0.366px;">Orbis Dynamics</span>
<span class="t" style="left:284.50px;top:420.50px;font:normal normal 13px/20px 'Liberation Sans', sans-serif;color:#000;letter-spacing:-0.308px;">Task A</span>
<span class="t" style="left:485.33px;top:420.50px;font:normal normal 13px/20px 'Liberation Sans', sans-serif;color:#000;letter-spacing:0.000px;">11</span>
<span class="t" style="left:519.60px;top:420.50px;font:normal normal 13px/20px 'Liberation Sans', sans-serif;color:#000;letter-spacing:0.000px;">8</span>
<span class="t" style="left:540.60px;top:420.50px;font:normal normal 13px/20px 'Liberation Sans', sans-serif;color:#000;letter-spacing:0.000px;">3</span>
<span class="t" style="left:562.33px;top:420.50px;font:normal normal 13px/20px 'Liberation Sans', sans-serif;color:#000;letter-spacing:0.000px;">11</span>
<span class="t" style="left:611.33px;top:420.50px;font:normal normal 13px/20px 'Liberation Sans', sans-serif;color:#000;letter-spacing:0.000px;">11</span>
<span class="t" style="left:645.60px;top:420.50px;font:normal normal 13px/20px 'Liberation Sans', sans-serif;color:#000;letter-spacing:0.000px;">8</span>
<span class="t" style="left:673.60px;top:420.50px;font:normal normal 13px/20px 'Liberation Sans', sans-serif;color:#000;letter-spacing:0.000px;">3</span>
<span class="t" style="left:695.33px;top:420.50px;font:normal normal 13px/20px 'Liberation Sans', sans-serif;color:#000;letter-spacing:0.000px;">11</span>
<span class="t" style="left:716.33px;top:420.50px;font:normal normal 13px/20px 'Liberation Sans', sans-serif;color:#000;letter-spacing:0.000px;">11</span>
<span class="t" style="left:836.37px;top:420.50px;font:normal normal 13px/20px 'Liberation Sans', sans-serif;color:#000;letter-spacing:0.000px;">77</span>
<span class="t" style="left:284.50px;top:440.50px;font:normal normal 13px/20px 'Liberation Sans', sans-serif;color:#000;letter-spacing:0.435px;">Training</span>
<span class="t" style="left:484.37px;top:440.50px;font:normal normal 13px/20px 'Liberation Sans', sans-serif;color:#000;letter-spacing:0.000px;">28</span>
<span class="t" style="left:512.37px;top:440.50px;font:normal normal 13px/20px 'Liberation Sans', sans-serif;color:#000;letter-spacing:0.000px;">14</span>
<span class="t" style="left:533.37px;top:440.50px;font:normal normal 13px/20px 'Liberation Sans', sans-serif;color:#000;letter-spacing:0.000px;">14</span>
<span class="t" style="left:561.37px;top:440.50px;font:normal normal 13px/20px 'Liberation Sans', sans-serif;color:#000;letter-spacing:0.000px;">28</span>
<span class="t" style="left:610.37px;top:440.50px;font:normal normal 13px/20px 'Liberation Sans', sans-serif;color:#000;letter-spacing:0.000px;">28</span>
<span class="t" style="left:638.37px;top:440.50px;font:normal normal 13px/20px 'Liberation Sans', sans-serif;color:#000;letter-spacing:0.000px;">21</span>
<span class="t" style="left:666.37px;top:440.50px;font:normal normal 13px/20px 'Liberation Sans', sans-serif;color:#000;letter-spacing:0.000px;">14</span>
<span class="t" style="left:694.37px;top:440.50px;font:normal normal 13px/20px 'Liberation Sans', sans-serif;color:#000;letter-spacing:0.000px;">21</span>
<span class="t" style="left:715.37px;top:440.50px;font:normal normal 13px/20px 'Liberation Sans', sans-serif;color:#000;letter-spacing:0.000px;">21</span>
<span class="t" style="left:829.14px;top:440.50px;font:normal normal 13px/20px 'Liberation Sans', sans-serif;color:#000;letter-spacing:0.000px;">189</span>
<span class="t" style="left:29.50px;top:460.50px;font:normal bold 13px/20px 'Liberation Sans', sans-serif;color:#000;letter-spacing:-0.214px;">Orbis Dynamics Total</span>
<div class="b" style="left:27px;top:459px;width:255px;height:1px;background:#d86dcd"></div>
<div class="b" style="left:282px;top:459px;width:572px;height:1px;background:#a02b93"></div>
<div class="b" style="left:27px;top:479px;width:827px;height:1px;background:#a02b93"></div>
<span class="t" style="left:484.37px;top:460.50px;font:normal bold 13px/20px 'Liberation Sans', sans-serif;color:#000;letter-spacing:0.000px;">39</span>
<span class="t" style="left:512.37px;top:460.50px;font:normal bold 13px/20px 'Liberation Sans', sans-serif;color:#000;letter-spacing:0.000px;">22</span>
<span class="t" style="left:533.37px;top:460.50px;font:normal bold 13px/20px 'Liberation Sans', sans-serif;color:#000;letter-spacing:0.000px;">17</span>
<span class="t" style="left:561.37px;top:460.50px;font:normal bold 13px/20px 'Liberation Sans', sans-serif;color:#000;letter-spacing:0.000px;">39</span>
<span class="t" style="left:610.37px;top:460.50px;font:normal bold 13px/20px 'Liberation Sans', sans-serif;color:#000;letter-spacing:0.000px;">39</span>
<span class="t" style="left:638.37px;top:460.50px;font:normal bold 13px/20px 'Liberation Sans', sans-serif;color:#000;letter-spacing:0.000px;">29</span>
<span class="t" style="left:666.37px;top:460.50px;font:normal bold 13px/20px 'Liberation Sans', sans-serif;color:#000;letter-spacing:0.000px;">17</span>
<span class="t" style="left:694.37px;top:460.50px;font:normal bold 13px/20px 'Liberation Sans', sans-serif;color:#000;letter-spacing:0.000px;">32</span>
<span class="t" style="left:715.37px;top:460.50px;font:normal bold 13px/20px 'Liberation Sans', sans-serif;color:#000;letter-spacing:0.000px;">32</span>
<span class="t" style="left:829.14px;top:460.50px;font:normal bold 13px/20px 'Liberation Sans', sans-serif;color:#000;letter-spacing:0.000px;">266</span>
<div class="b" style="left:31px;top:485px;width:9px;height:9px;box-sizing:border-box;border:1px solid #9ba2ae;border-radius:2px;background:linear-gradient(#f8f9fb,#d9dde6)"></div>
<div class="b" style="left:33px;top:489px;width:5px;height:1px;background:#2b3f66"></div>
<span class="t" style="left:42.60px;top:480.50px;font:normal bold 13px/20px 'Liberation Sans', sans-serif;color:#000;letter-spacing:-0.057px;">PrimeSphere Corporation</span>
<span class="t" style="left:284.50px;top:480.50px;font:normal normal 13px/20px 'Liberation Sans', sans-serif;color:#000;letter-spacing:-0.308px;">Task A</span>
<span class="t" style="left:484.37px;top:480.50px;font:normal normal 13px/20px 'Liberation Sans', sans-serif;color:#000;letter-spacing:0.000px;">14</span>
<span class="t" style="left:519.60px;top:480.50px;font:normal normal 13px/20px 'Liberation Sans', sans-serif;color:#000;letter-spacing:0.000px;">5</span>
<span class="t" style="left:540.60px;top:480.50px;font:normal normal 13px/20px 'Liberation Sans', sans-serif;color:#000;letter-spacing:0.000px;">9</span>
<span class="t" style="left:561.37px;top:480.50px;font:normal normal 13px/20px 'Liberation Sans', sans-serif;color:#000;letter-spacing:0.000px;">14</span>
<span class="t" style="left:610.37px;top:480.50px;font:normal normal 13px/20px 'Liberation Sans', sans-serif;color:#000;letter-spacing:0.000px;">14</span>
<span class="t" style="left:639.33px;top:480.50px;font:normal normal 13px/20px 'Liberation Sans', sans-serif;color:#000;letter-spacing:0.000px;">11</span>
<span class="t" style="left:673.60px;top:480.50px;font:normal normal 13px/20px 'Liberation Sans', sans-serif;color:#000;letter-spacing:0.000px;">5</span>
<span class="t" style="left:694.37px;top:480.50px;font:normal normal 13px/20px 'Liberation Sans', sans-serif;color:#000;letter-spacing:0.000px;">12</span>
<span class="t" style="left:836.37px;top:480.50px;font:normal normal 13px/20px 'Liberation Sans', sans-serif;color:#000;letter-spacing:0.000px;">84</span>
<span class="t" style="left:29.50px;top:500.50px;font:normal bold 13px/20px 'Liberation Sans', sans-serif;color:#000;letter-spacing:-0.010px;">PrimeSphere Corporation Total</span>
<div class="b" style="left:27px;top:499px;width:255px;height:1px;background:#d86dcd"></div>
<div class="b" style="left:282px;top:499px;width:572px;height:1px;background:#a02b93"></div>
<div class="b" style="left:27px;top:519px;width:827px;height:1px;background:#a02b93"></div>
<span class="t" style="left:483.37px;top:500.50px;font:normal bold 13px/20px 'Liberation Sans', sans-serif;color:#000;letter-spacing:0.000px;">14</span>
<span class="t" style="left:519.60px;top:500.50px;font:normal bold 13px/20px 'Liberation Sans', sans-serif;color:#000;letter-spacing:0.000px;">5</span>
<span class="t" style="left:540.60px;top:500.50px;font:normal bold 13px/20px 'Liberation Sans', sans-serif;color:#000;letter-spacing:0.000px;">9</span>
<span class="t" style="left:560.37px;top:500.50px;font:normal bold 13px/20px 'Liberation Sans', sans-serif;color:#000;letter-spacing:0.000px;">14</span>
<span class="t" style="left:609.37px;top:500.50px;font:normal bold 13px/20px 'Liberation Sans', sans-serif;color:#000;letter-spacing:0.000px;">14</span>
<span class="t" style="left:639.09px;top:500.50px;font:normal bold 13px/20px 'Liberation Sans', sans-serif;color:#000;letter-spacing:0.000px;">11</span>
<span class="t" style="left:673.60px;top:500.50px;font:normal bold 13px/20px 'Liberation Sans', sans-serif;color:#000;letter-spacing:0.000px;">5</span>
<span class="t" style="left:694.37px;top:500.50px;font:normal bold 13px/20px 'Liberation Sans', sans-serif;color:#000;letter-spacing:0.000px;">12</span>
<span class="t" style="left:835.37px;top:500.50px;font:normal bold 13px/20px 'Liberation Sans', sans-serif;color:#000;letter-spacing:0.000px;">84</span>
<div class="b" style="left:31px;top:525px;width:9px;height:9px;box-sizing:border-box;border:1px solid #9ba2ae;border-radius:2px;background:linear-gradient(#f8f9fb,#d9dde6)"></div>
<div class="b" style="left:33px;top:529px;width:5px;height:1px;background:#2b3f66"></div>
<span class="t" style="left:42.60px;top:520.50px;font:normal bold 13px/20px 'Liberation Sans', sans-serif;color:#000;letter-spacing:-0.243px;">Target Skills</span>
<span class="t" style="left:284.50px;top:520.50px;font:normal normal 13px/20px 'Liberation Sans', sans-serif;color:#000;letter-spacing:0.319px;">Activity Lambda</span>
<span class="t" style="left:491.60px;top:520.50px;font:normal normal 13px/20px 'Liberation Sans', sans-serif;color:#000;letter-spacing:0.000px;">6</span>
<span class="t" style="left:519.60px;top:520.50px;font:normal normal 13px/20px 'Liberation Sans', sans-serif;color:#000;letter-spacing:0.000px;">3</span>
<span class="t" style="left:540.60px;top:520.50px;font:normal normal 13px/20px 'Liberation Sans', sans-serif;color:#000;letter-spacing:0.000px;">3</span>
<span class="t" style="left:568.60px;top:520.50px;font:normal normal 13px/20px 'Liberation Sans', sans-serif;color:#000;letter-spacing:0.000px;">6</span>
<span class="t" style="left:617.60px;top:520.50px;font:normal normal 13px/20px 'Liberation Sans', sans-serif;color:#000;letter-spacing:0.000px;">6</span>
<span class="t" style="left:645.60px;top:520.50px;font:normal normal 13px/20px 'Liberation Sans', sans-serif;color:#000;letter-spacing:0.000px;">3</span>
<span class="t" style="left:673.60px;top:520.50px;font:normal normal 13px/20px 'Liberation Sans', sans-serif;color:#000;letter-spacing:0.000px;">6</span>
<span class="t" style="left:701.60px;top:520.50px;font:normal normal 13px/20px 'Liberation Sans', sans-serif;color:#000;letter-spacing:0.000px;">3</span>
<span class="t" style="left:836.37px;top:520.50px;font:normal normal 13px/20px 'Liberation Sans', sans-serif;color:#000;letter-spacing:0.000px;">36</span>
<span class="t" style="left:284.50px;top:540.50px;font:normal normal 13px/20px 'Liberation Sans', sans-serif;color:#000;letter-spacing:-0.308px;">Task A</span>
<span class="t" style="left:491.60px;top:540.50px;font:normal normal 13px/20px 'Liberation Sans', sans-serif;color:#000;letter-spacing:0.000px;">4</span>
<span class="t" style="left:519.60px;top:540.50px;font:normal normal 13px/20px 'Liberation Sans', sans-serif;color:#000;letter-spacing:0.000px;">4</span>
<span class="t" style="left:568.60px;top:540.50px;font:normal normal 13px/20px 'Liberation Sans', sans-serif;color:#000;letter-spacing:0.000px;">4</span>
<span class="t" style="left:617.60px;top:540.50px;font:normal normal 13px/20px 'Liberation Sans', sans-serif;color:#000;letter-spacing:0.000px;">4</span>
<span class="t" style="left:645.60px;top:540.50px;font:normal normal 13px/20px 'Liberation Sans', sans-serif;color:#000;letter-spacing:0.000px;">4</span>
<span class="t" style="left:701.60px;top:540.50px;font:normal normal 13px/20px 'Liberation Sans', sans-serif;color:#000;letter-spacing:0.000px;">4</span>
<span class="t" style="left:836.37px;top:540.50px;font:normal normal 13px/20px 'Liberation Sans', sans-serif;color:#000;letter-spacing:0.000px;">24</span>
<span class="t" style="left:284.50px;top:560.50px;font:normal normal 13px/20px 'Liberation Sans', sans-serif;color:#000;letter-spacing:-0.328px;">Task B</span>
<span class="t" style="left:491.60px;top:560.50px;font:normal normal 13px/20px 'Liberation Sans', sans-serif;color:#000;letter-spacing:0.000px;">8</span>
<span class="t" style="left:519.60px;top:560.50px;font:normal normal 13px/20px 'Liberation Sans', sans-serif;color:#000;letter-spacing:0.000px;">4</span>
<span class="t" style="left:540.60px;top:560.50px;font:normal normal 13px/20px 'Liberation Sans', sans-serif;color:#000;letter-spacing:0.000px;">4</span>
<span class="t" style="left:568.60px;top:560.50px;font:normal normal 13px/20px 'Liberation Sans', sans-serif;color:#000;letter-spacing:0.000px;">8</span>
<span class="t" style="left:617.60px;top:560.50px;font:normal normal 13px/20px 'Liberation Sans', sans-serif;color:#000;letter-spacing:0.000px;">8</span>
<span class="t" style="left:645.60px;top:560.50px;font:normal normal 13px/20px 'Liberation Sans', sans-serif;color:#000;letter-spacing:0.000px;">4</span>
<span class="t" style="left:673.60px;top:560.50px;font:normal normal 13px/20px 'Liberation Sans', sans-serif;color:#000;letter-spacing:0.000px;">4</span>
<span class="t" style="left:701.60px;top:560.50px;font:normal normal 13px/20px 'Liberation Sans', sans-serif;color:#000;letter-spacing:0.000px;">8</span>
<span class="t" style="left:836.37px;top:560.50px;font:normal normal 13px/20px 'Liberation Sans', sans-serif;color:#000;letter-spacing:0.000px;">48</span>
<span class="t" style="left:284.50px;top:580.50px;font:normal normal 13px/20px 'Liberation Sans', sans-serif;color:#000;letter-spacing:0.435px;">Training</span>
<span class="t" style="left:484.37px;top:580.50px;font:normal normal 13px/20px 'Liberation Sans', sans-serif;color:#000;letter-spacing:0.000px;">21</span>
<span class="t" style="left:512.37px;top:580.50px;font:normal normal 13px/20px 'Liberation Sans', sans-serif;color:#000;letter-spacing:0.000px;">21</span>
<span class="t" style="left:561.37px;top:580.50px;font:normal normal 13px/20px 'Liberation Sans', sans-serif;color:#000;letter-spacing:0.000px;">21</span>
<span class="t" style="left:610.37px;top:580.50px;font:normal normal 13px/20px 'Liberation Sans', sans-serif;color:#000;letter-spacing:0.000px;">21</span>
<span class="t" style="left:638.37px;top:580.50px;font:normal normal 13px/20px 'Liberation Sans', sans-serif;color:#000;letter-spacing:0.000px;">21</span>
<span class="t" style="left:666.37px;top:580.50px;font:normal normal 13px/20px 'Liberation Sans', sans-serif;color:#000;letter-spacing:0.000px;">21</span>
<span class="t" style="left:829.14px;top:580.50px;font:normal normal 13px/20px 'Liberation Sans', sans-serif;color:#000;letter-spacing:0.000px;">126</span>
<span class="t" style="left:29.50px;top:600.50px;font:normal bold 13px/20px 'Liberation Sans', sans-serif;color:#000;letter-spacing:-0.124px;">Target Skills Total</span>
<div class="b" style="left:27px;top:599px;width:255px;height:1px;background:#d86dcd"></div>
<div class="b" style="left:282px;top:599px;width:572px;height:1px;background:#a02b93"></div>
<div class="b" style="left:27px;top:619px;width:827px;height:1px;background:#a02b93"></div>
<span class="t" style="left:484.37px;top:600.50px;font:normal bold 13px/20px 'Liberation Sans', sans-serif;color:#000;letter-spacing:0.000px;">39</span>
<span class="t" style="left:512.37px;top:600.50px;font:normal bold 13px/20px 'Liberation Sans', sans-serif;color:#000;letter-spacing:0.000px;">32</span>
<span class="t" style="left:540.60px;top:600.50px;font:normal bold 13px/20px 'Liberation Sans', sans-serif;color:#000;letter-spacing:0.000px;">7</span>
<span class="t" style="left:561.37px;top:600.50px;font:normal bold 13px/20px 'Liberation Sans', sans-serif;color:#000;letter-spacing:0.000px;">39</span>
<span class="t" style="left:610.37px;top:600.50px;font:normal bold 13px/20px 'Liberation Sans', sans-serif;color:#000;letter-spacing:0.000px;">39</span>
<span class="t" style="left:638.37px;top:600.50px;font:normal bold 13px/20px 'Liberation Sans', sans-serif;color:#000;letter-spacing:0.000px;">32</span>
<span class="t" style="left:666.37px;top:600.50px;font:normal bold 13px/20px 'Liberation Sans', sans-serif;color:#000;letter-spacing:0.000px;">31</span>
<span class="t" style="left:694.37px;top:600.50px;font:normal bold 13px/20px 'Liberation Sans', sans-serif;color:#000;letter-spacing:0.000px;">15</span>
<span class="t" style="left:828.14px;top:600.50px;font:normal bold 13px/20px 'Liberation Sans', sans-serif;color:#000;letter-spacing:0.000px;">234</span>
<div class="b" style="left:31px;top:625px;width:9px;height:9px;box-sizing:border-box;border:1px solid #9ba2ae;border-radius:2px;background:linear-gradient(#f8f9fb,#d9dde6)"></div>
<div class="b" style="left:33px;top:629px;width:5px;height:1px;background:#2b3f66"></div>
<span class="t" style="left:42.60px;top:620.50px;font:normal bold 13px/20px 'Liberation Sans', sans-serif;color:#000;letter-spacing:-0.069px;">VitaNova Enterprises</span>
<span class="t" style="left:284.50px;top:620.50px;font:normal normal 13px/20px 'Liberation Sans', sans-serif;color:#000;letter-spacing:-0.328px;">Task B</span>
<span class="t" style="left:491.60px;top:620.50px;font:normal normal 13px/20px 'Liberation Sans', sans-serif;color:#000;letter-spacing:0.000px;">4</span>
<span class="t" style="left:519.60px;top:620.50px;font:normal normal 13px/20px 'Liberation Sans', sans-serif;color:#000;letter-spacing:0.000px;">2</span>
<span class="t" style="left:540.60px;top:620.50px;font:normal normal 13px/20px 'Liberation Sans', sans-serif;color:#000;letter-spacing:0.000px;">2</span>
<span class="t" style="left:617.60px;top:620.50px;font:normal normal 13px/20px 'Liberation Sans', sans-serif;color:#000;letter-spacing:0.000px;">4</span>
<span class="t" style="left:645.60px;top:620.50px;font:normal normal 13px/20px 'Liberation Sans', sans-serif;color:#000;letter-spacing:0.000px;">2</span>
<span class="t" style="left:673.60px;top:620.50px;font:normal normal 13px/20px 'Liberation Sans', sans-serif;color:#000;letter-spacing:0.000px;">2</span>
<span class="t" style="left:836.37px;top:620.50px;font:normal normal 13px/20px 'Liberation Sans', sans-serif;color:#000;letter-spacing:0.000px;">16</span>
<span class="t" style="left:284.50px;top:640.50px;font:normal normal 13px/20px 'Liberation Sans', sans-serif;color:#000;letter-spacing:0.435px;">Training</span>
<span class="t" style="left:491.60px;top:640.50px;font:normal normal 13px/20px 'Liberation Sans', sans-serif;color:#000;letter-spacing:0.000px;">7</span>
<span class="t" style="left:540.60px;top:640.50px;font:normal normal 13px/20px 'Liberation Sans', sans-serif;color:#000;letter-spacing:0.000px;">7</span>
<span class="t" style="left:617.60px;top:640.50px;font:normal normal 13px/20px 'Liberation Sans', sans-serif;color:#000;letter-spacing:0.000px;">7</span>
<span class="t" style="left:645.60px;top:640.50px;font:normal normal 13px/20px 'Liberation Sans', sans-serif;color:#000;letter-spacing:0.000px;">7</span>
<span class="t" style="left:836.37px;top:640.50px;font:normal normal 13px/20px 'Liberation Sans', sans-serif;color:#000;letter-spacing:0.000px;">28</span>
<span class="t" style="left:29.50px;top:660.50px;font:normal bold 13px/20px 'Liberation Sans', sans-serif;color:#000;letter-spacing:-0.025px;">VitaNova Enterprises Total</span>
<div class="b" style="left:27px;top:659px;width:255px;height:1px;background:#d86dcd"></div>
<div class="b" style="left:282px;top:659px;width:572px;height:1px;background:#a02b93"></div>
<div class="b" style="left:27px;top:679px;width:827px;height:1px;background:#a02b93"></div>
<span class="t" style="left:485.09px;top:660.50px;font:normal bold 13px/20px 'Liberation Sans', sans-serif;color:#000;letter-spacing:0.000px;">11</span>
<span class="t" style="left:519.60px;top:660.50px;font:normal bold 13px/20px 'Liberation Sans', sans-serif;color:#000;letter-spacing:0.000px;">2</span>
<span class="t" style="left:540.60px;top:660.50px;font:normal bold 13px/20px 'Liberation Sans', sans-serif;color:#000;letter-spacing:0.000px;">9</span>
<span class="t" style="left:611.09px;top:660.50px;font:normal bold 13px/20px 'Liberation Sans', sans-serif;color:#000;letter-spacing:0.000px;">11</span>
<span class="t" style="left:645.60px;top:660.50px;font:normal bold 13px/20px 'Liberation Sans', sans-serif;color:#000;letter-spacing:0.000px;">9</span>
<span class="t" style="left:673.60px;top:660.50px;font:normal bold 13px/20px 'Liberation Sans', sans-serif;color:#000;letter-spacing:0.000px;">2</span>
<span class="t" style="left:835.37px;top:660.50px;font:normal bold 13px/20px 'Liberation Sans', sans-serif;color:#000;letter-spacing:0.000px;">44</span>
<div class="b" style="left:1px;top:675px;width:1082px;height:32px;background:#f0f0f0"></div>
<div class="b" style="left:1064px;top:120px;width:17.5px;height:557.5px;background:#f6f6f6;border-radius:8.75px"></div>
<svg class="b" style="left:1068px;top:125px;" width="9" height="7" viewBox="0 0 9 7"><path d="M4.5 0.3L9 6.2a.5.5 0 0 1-.4.8H.4a.5.5 0 0 1-.4-.8z" fill="#707070"/></svg>
<div class="b" style="left:1068px;top:137px;width:9px;height:481px;background:#707070;border-radius:4.5px"></div>
<svg class="b" style="left:1068px;top:666px;" width="9" height="7" viewBox="0 0 9 7"><path d="M4.5 6.7L9 .8a.5.5 0 0 0-.4-.8H.4a.5.5 0 0 0-.4.8z" fill="#707070"/></svg>
<svg class="b" style="left:29px;top:685px;" width="8" height="11" viewBox="0 0 8 11"><path d="M7 0.6L1.2 5.3 7 10" fill="none" stroke="#a8a8a8" stroke-width="1.2"/></svg>
<svg class="b" style="left:62px;top:685px;" width="8" height="11" viewBox="0 0 8 11"><path d="M1 0.6l5.8 4.7L1 10" fill="none" stroke="#444" stroke-width="1.2"/></svg>
<div class="b" style="left:117px;top:675px;width:58px;height:28px;background:#fff;border-radius:0 0 5px 5px;box-shadow:0 0 1px rgba(0,0,0,.15)"></div>
<span class="t" style="left:125.40px;top:678.72px;font:normal bold 13.5px/20px 'Liberation Sans', sans-serif;color:#303030;letter-spacing:-0.832px;">Sheet1</span>
<div class="b" style="left:125px;top:698px;width:41px;height:2px;background:#107c41"></div>
<span class="t" style="left:192.30px;top:683.43px;font:normal normal 10.3px/20px 'Liberation Sans', sans-serif;color:#333;letter-spacing:0.000px;">_</span>
<span class="t" style="left:197.30px;top:682.32px;font:normal normal 13.5px/20px 'Liberation Sans', sans-serif;color:#333;letter-spacing:-0.052px;">All</span>
<span class="t" style="left:240.20px;top:683.43px;font:normal normal 10.3px/20px 'Liberation Sans', sans-serif;color:#333;letter-spacing:0.000px;">_</span>
<span class="t" style="left:244.20px;top:682.32px;font:normal normal 13.5px/20px 'Liberation Sans', sans-serif;color:#333;letter-spacing:-0.477px;">Evt</span>
<span class="t" style="left:291.10px;top:683.43px;font:normal normal 10.3px/20px 'Liberation Sans', sans-serif;color:#333;letter-spacing:0.000px;">_</span>
<span class="t" style="left:295.10px;top:682.32px;font:normal normal 13.5px/20px 'Liberation Sans', sans-serif;color:#333;letter-spacing:0.371px;">Dat</span>
<span class="t" style="left:344.30px;top:683.43px;font:normal normal 10.3px/20px 'Liberation Sans', sans-serif;color:#333;letter-spacing:0.000px;">_</span>
<span class="t" style="left:348.30px;top:682.32px;font:normal normal 13.5px/20px 'Liberation Sans', sans-serif;color:#333;letter-spacing:-1.129px;">Res</span>
<span class="t" style="left:396.10px;top:683.43px;font:normal normal 10.3px/20px 'Liberation Sans', sans-serif;color:#333;letter-spacing:0.000px;">_</span>
<span class="t" style="left:401.10px;top:682.32px;font:normal normal 13.5px/20px 'Liberation Sans', sans-serif;color:#333;letter-spacing:0.694px;">Aff</span>
<span class="t" style="left:446.00px;top:683.43px;font:normal normal 10.3px/20px 'Liberation Sans', sans-serif;color:#333;letter-spacing:0.000px;">_</span>
<span class="t" style="left:451.00px;top:682.32px;font:normal normal 13.5px/20px 'Liberation Sans', sans-serif;color:#333;letter-spacing:-1.229px;">Cus</span>
<span class="t" style="left:501.30px;top:683.43px;font:normal normal 10.3px/20px 'Liberation Sans', sans-serif;color:#333;letter-spacing:0.000px;">_</span>
<span class="t" style="left:505.30px;top:682.32px;font:normal normal 13.5px/20px 'Liberation Sans', sans-serif;color:#333;letter-spacing:1.073px;">Muc</span>
<span class="t" style="left:560.20px;top:683.43px;font:normal normal 10.3px/20px 'Liberation Sans', sans-serif;color:#333;letter-spacing:0.000px;">_</span>
<span class="t" style="left:564.20px;top:682.32px;font:normal normal 13.5px/20px 'Liberation Sans', sans-serif;color:#333;letter-spacing:0.000px;">P</span>
<div class="b" style="left:178px;top:682px;width:1px;height:18px;background:#d2d2d2"></div>
<div class="b" style="left:226px;top:682px;width:1px;height:18px;background:#d2d2d2"></div>
<div class="b" style="left:276px;top:682px;width:1px;height:18px;background:#d2d2d2"></div>
<div class="b" style="left:329px;top:682px;width:1px;height:18px;background:#d2d2d2"></div>
<div class="b" style="left:382px;top:682px;width:1px;height:18px;background:#d2d2d2"></div>
<div class="b" style="left:432px;top:682px;width:1px;height:18px;background:#d2d2d2"></div>
<div class="b" style="left:486px;top:682px;width:1px;height:18px;background:#d2d2d2"></div>
<div class="b" style="left:545px;top:682px;width:1px;height:18px;background:#d2d2d2"></div>
<div class="b" style="left:583px;top:689px;width:3px;height:3px;background:#333;border-radius:1.5px"></div>
<div class="b" style="left:587px;top:689px;width:3px;height:3px;background:#333;border-radius:1.5px"></div>
<div class="b" style="left:591px;top:689px;width:3px;height:3px;background:#333;border-radius:1.5px"></div>
<svg class="b" style="left:615px;top:685px;" width="12" height="12" viewBox="0 0 12 12"><path d="M5.7 0.5v10.6 M0.4 5.8h10.6" stroke="#333" stroke-width="1.1" fill="none"/></svg>
<div class="b" style="left:652px;top:688px;width:2px;height:2px;background:#333"></div>
<div class="b" style="left:652px;top:692px;width:2px;height:2px;background:#333"></div>
<div class="b" style="left:652px;top:696px;width:2px;height:2px;background:#333"></div>
<div class="b" style="left:669px;top:682px;width:395px;height:17px;background:#f6f6f6;border-radius:8.5px"></div>
<svg class="b" style="left:673.8px;top:686px;" width="7.5" height="9" viewBox="0 0 7.5 9"><path d="M0.3 4.5L6.6 0.1a.5.5 0 0 1 .8.4v8a.5.5 0 0 1-.8.4z" fill="#707070"/></svg>
<div class="b" style="left:686px;top:686px;width:343px;height:9px;background:#707070;border-radius:4.5px"></div>
<svg class="b" style="left:1052px;top:686px;" width="7.5" height="9" viewBox="0 0 7.5 9"><path d="M7.2 4.5L.9 0.1a.5.5 0 0 0-.8.4v8a.5.5 0 0 0 .8.4z" fill="#707070"/></svg>
<div class="b" style="left:1px;top:707px;width:1082px;height:1px;background:#fbfbfb"></div>
<div class="b" style="left:1px;top:708px;width:1082px;height:21px;background:#f5f5f5"></div>
<span class="t" style="left:12.50px;top:708.79px;font:normal normal 11px/20px 'Liberation Sans', sans-serif;color:#333;letter-spacing:-0.449px;">Ready</span>
<svg class="b" style="left:62.5px;top:710.5px;" width="15" height="15" viewBox="0 0 15 15"><circle cx="6.4" cy="2.4" r="1.9" fill="none" stroke="#2b2b2b" stroke-width="1"/><path d="M4.3 3.6L1.9 2.7C0.7 2.3 0 4 1.2 4.5L3.9 5.6V8.6L2.6 12.4C2.3 13.7 3.9 14.2 4.4 13L5.6 9.8 M8.5 3.6l2.4-0.9c1.2-0.4 1.9 1.3 0.7 1.8L9 5.5" fill="none" stroke="#2b2b2b" stroke-width="1" stroke-linejoin="round" stroke-linecap="round"/><circle cx="6.3" cy="9.7" r="0.7" fill="#2b2b2b"/><path d="M7.8 7.7l6.4 6.4 M14.2 7.7l-6.4 6.4" stroke="#2b2b2b" stroke-width="1" fill="none"/></svg>
<span class="t" style="left:81.60px;top:708.02px;font:normal bold 11.5px/20px 'Liberation Sans', sans-serif;color:#3a3a3a;letter-spacing:-0.481px;">Accessibility: Investigate</span>
<div class="b" style="left:772px;top:708px;width:40px;height:21px;background:#dedede"></div>
<svg class="b" style="left:785px;top:711px;" width="13" height="13" viewBox="0 0 13 13"><path d="M1 1h11v11H1z M1 4.7h11 M1 8.3h11 M4.7 1v11 M8.3 1v11" fill="none" stroke="#222" stroke-width="1.3"/></svg>
<svg class="b" style="left:825px;top:711px;" width="14" height="13" viewBox="0 0 14 13"><path d="M0.6 0.6h12.8v11.8H0.6z" fill="none" stroke="#222" stroke-width="1.2"/><path d="M4 3.2h6v6.6H4z M4 5.4h6 M4 7.6h6" fill="none" stroke="#222" stroke-width="1"/></svg>
<svg class="b" style="left:865px;top:711px;" width="14" height="13" viewBox="0 0 14 13"><path d="M0.6 0.6h12.8v11.8H0.6z M0.6 7.6h8.2V0.6 M4.6 0.6v7" fill="none" stroke="#222" stroke-width="1.2"/></svg>
<div class="b" style="left:898px;top:717px;width:8px;height:1px;background:#333"></div>
<div class="b" style="left:911px;top:717px;width:100px;height:1px;background:#777"></div>
<div class="b" style="left:959px;top:713px;width:5px;height:11px;background:#555;border-radius:1px"></div>
<div class="b" style="left:1016px;top:717px;width:8px;height:1px;background:#333"></div>
<div class="b" style="left:1019.5px;top:714px;width:1px;height:8px;background:#333"></div>
<span class="t" style="left:1037.50px;top:708.19px;font:normal normal 11px/20px 'Liberation Sans', sans-serif;color:#333;letter-spacing:-0.651px;">100%</span>
<div id="frame"></div></div></body></html>
